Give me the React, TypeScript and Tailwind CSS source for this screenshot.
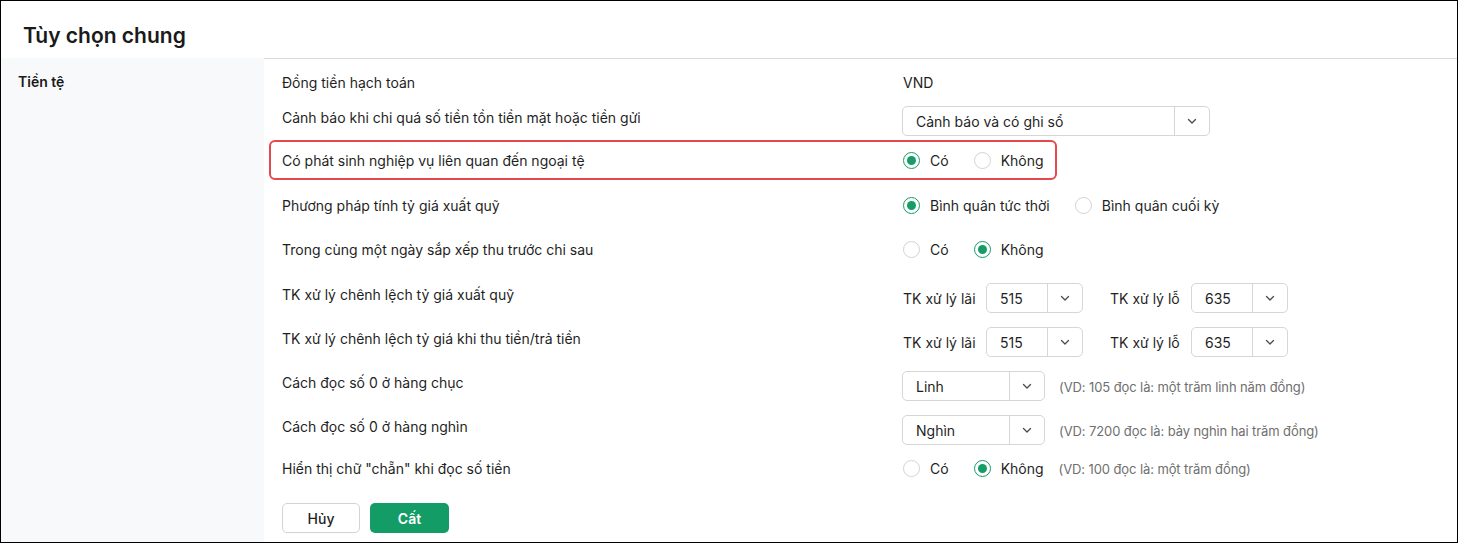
import { ReactNode } from "react";

function Chevron() {
  return (
    <svg width="12" height="12" viewBox="0 0 12 12" fill="none" className="text-[#4b4b4b]">
      <path d="M2.5 4.5 6 8l3.5-3.5" stroke="currentColor" strokeWidth="1.3" strokeLinecap="round" strokeLinejoin="round" />
    </svg>
  );
}

function Select({ value, width }: { value: string; width: string }) {
  return (
    <div className={`-ml-px flex h-[30px] items-stretch rounded-[5px] border border-[#d6d6d6] bg-white ${width}`}>
      <div className="flex flex-1 items-center pl-[13px] text-[14px] text-[#1f1f1f]">{value}</div>
      <div className="flex w-[35px] items-center justify-center border-l border-[#d6d6d6]">
        <Chevron />
      </div>
    </div>
  );
}

function Radio({ label, checked }: { label: string; checked?: boolean }) {
  return (
    <div className="flex items-center gap-[10px]">
      {checked ? (
        <span className="flex h-[17px] w-[17px] items-center justify-center rounded-full border-[1.5px] border-[#159c67] bg-white">
          <span className="h-[9px] w-[9px] rounded-full bg-[#159c67]" />
        </span>
      ) : (
        <span className="h-[17px] w-[17px] rounded-full border border-[#d3d3d3] bg-white" />
      )}
      <span className="text-[14px] text-[#1f1f1f]">{label}</span>
    </div>
  );
}

function Hint({ children }: { children: ReactNode }) {
  return <span className="text-[13px] tracking-[-0.1px] text-[#6f6f6f]">{children}</span>;
}

function Row({
  label,
  children,
  className = "",
  raise,
}: {
  label: string;
  children: ReactNode;
  className?: string;
  raise?: boolean;
}) {
  return (
    <div className={`flex h-[30px] items-center ${className}`}>
      <div className={`w-[621px] shrink-0 text-[14px] text-[#1f1f1f] ${raise ? "pb-[8px]" : ""}`}>{label}</div>
      <div className="flex items-center">{children}</div>
    </div>
  );
}

function TkRow({ label, className }: { label: string; className?: string }) {
  return (
    <Row label={label} className={className} raise>
      <span className="w-[84px] text-[14px] text-[#1f1f1f]">TK xử lý lãi</span>
      <Select value="515" width="w-[97px]" />
      <span className="ml-[27px] w-[82px] text-[14px] text-[#1f1f1f]">TK xử lý lỗ</span>
      <Select value="635" width="w-[97px]" />
    </Row>
  );
}

export default function App() {
  return (
    <div
      className="flex h-[543px] w-[1458px] flex-col border border-black bg-white"
      style={{ fontFamily: "Inter, 'Noto Sans', sans-serif" }}
    >
      <header className="h-[57px] shrink-0 pl-[22px] pt-[21px]">
        <h1 className="text-[21px] font-semibold leading-[28px] text-[#1a1a1a]">Tùy chọn chung</h1>
      </header>

      <div className="flex flex-1">
        <aside className="w-[263px] shrink-0 bg-[#f8f9fb] pl-[17px] pt-[13px]">
          <p className="text-[14px] font-semibold text-[#1a1a1a]">Tiền tệ</p>
        </aside>

        <main className="flex-1 border-t border-[#dadada] pl-[18px]">
          <Row label="Đồng tiền hạch toán" className="mt-[8px]">
            <span className="text-[14px] text-[#1f1f1f]">VND</span>
          </Row>

          <Row label="Cảnh báo khi chi quá số tiền tồn tiền mặt hoặc tiền gửi" className="mt-[9px]" raise>
            <Select value="Cảnh báo và có ghi sổ" width="w-[308px]" />
          </Row>

          <div className="-ml-[13px] mt-[4px] flex h-[40px] w-[788px] items-center rounded-[6px] border-2 border-[#e5484d] pl-[11px]">
            <div className="w-[621px] shrink-0 text-[14px] text-[#1f1f1f]">Có phát sinh nghiệp vụ liên quan đến ngoại tệ</div>
            <div className="flex items-center gap-[25px]">
              <Radio label="Có" checked />
              <Radio label="Không" />
            </div>
          </div>

          <Row label="Phương pháp tính tỷ giá xuất quỹ" className="mt-[10px]">
            <div className="flex items-center gap-[25px]">
              <Radio label="Bình quân tức thời" checked />
              <Radio label="Bình quân cuối kỳ" />
            </div>
          </Row>

          <Row label="Trong cùng một ngày sắp xếp thu trước chi sau" className="mt-[14px]">
            <div className="flex items-center gap-[25px]">
              <Radio label="Có" />
              <Radio label="Không" checked />
            </div>
          </Row>

          <TkRow label="TK xử lý chênh lệch tỷ giá xuất quỹ" className="mt-[19px]" />
          <TkRow label="TK xử lý chênh lệch tỷ giá khi thu tiền/trả tiền" className="mt-[14px]" />

          <Row label="Cách đọc số 0 ở hàng chục" className="mt-[14px]" raise>
            <Select value="Linh" width="w-[143px]" />
            <span className="ml-[14px]">
              <Hint>(VD: 105 đọc là: một trăm linh năm đồng)</Hint>
            </span>
          </Row>

          <Row label="Cách đọc số 0 ở hàng nghìn" className="mt-[14px]" raise>
            <Select value="Nghìn" width="w-[143px]" />
            <span className="ml-[14px]">
              <Hint>(VD: 7200 đọc là: bảy nghìn hai trăm đồng)</Hint>
            </span>
          </Row>

          <Row label={'Hiển thị chữ "chẵn" khi đọc số tiền'} className="mt-[8px]">
            <div className="flex items-center gap-[25px]">
              <Radio label="Có" />
              <Radio label="Không" checked />
            </div>
            <span className="ml-[15px]">
              <Hint>(VD: 100 đọc là: một trăm đồng)</Hint>
            </span>
          </Row>

          <div className="mt-[20px] flex gap-[10px]">
            <button className="h-[30px] w-[78px] rounded-[5px] border border-[#d3d3d3] bg-white text-[14px] font-medium text-[#1f1f1f]">
              Hủy
            </button>
            <button className="h-[30px] w-[79px] rounded-[5px] bg-[#139c66] text-[14px] font-semibold text-white">
              Cất
            </button>
          </div>
        </main>
      </div>
    </div>
  );
}
